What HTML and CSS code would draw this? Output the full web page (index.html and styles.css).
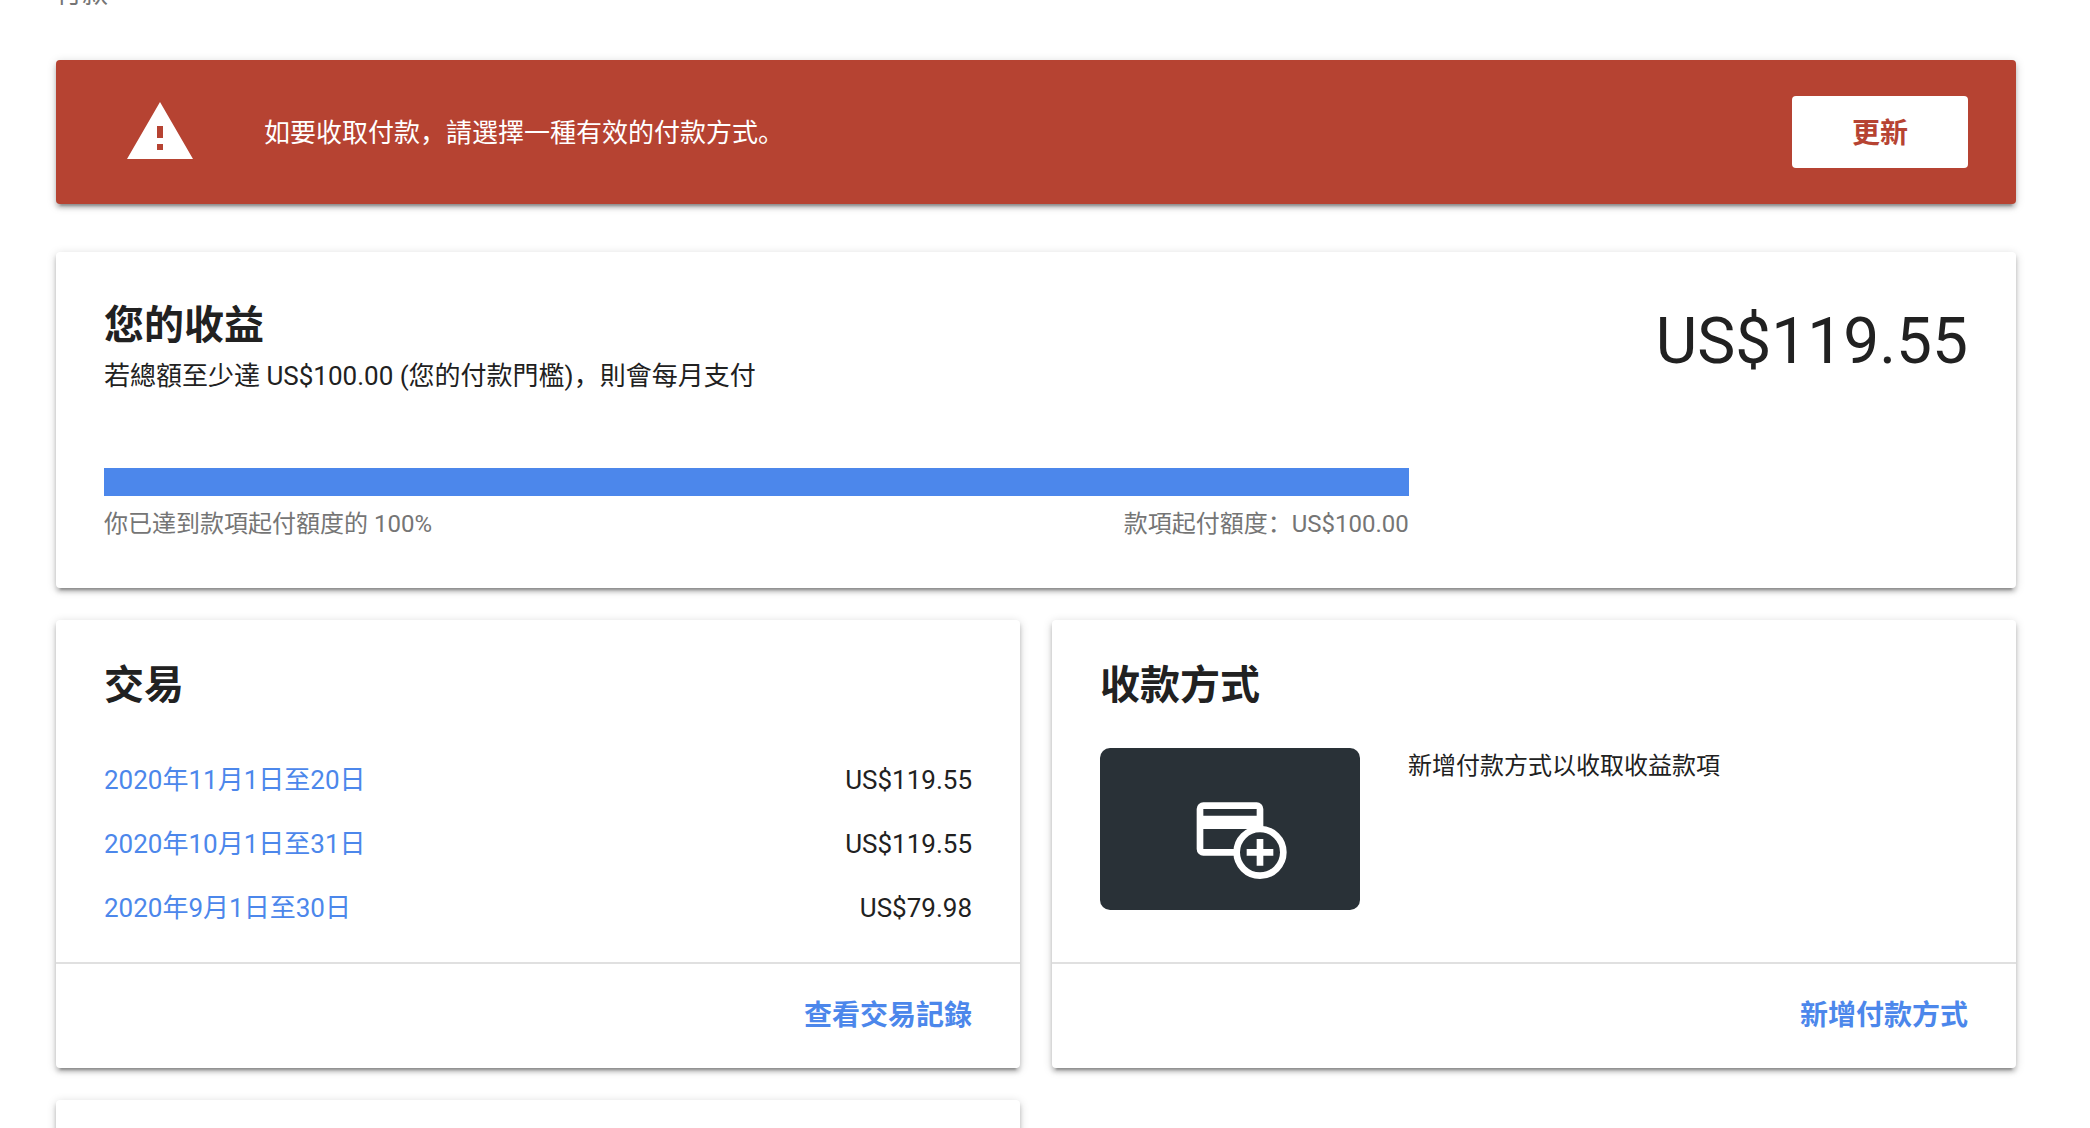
FILE: index.html
```
<!DOCTYPE html>
<html lang="zh-CN">
<head>
    <meta charset="UTF-8">
    <meta name="viewport" content="width=device-width, initial-scale=1.0">
    <title>付款</title>
    <link rel="stylesheet" href="styles.css">
</head>
<body>
    <header class="pageHeader">付款</header>

    <main class="content">
        <section class="banner">
            <svg class="bannerIcon" viewBox="0 0 24 24" aria-hidden="true">
                <path d="M1 21h22L12 2 1 21zm12-3h-2v-2h2v2zm0-4h-2v-4h2v4z"/>
            </svg>
            <p class="bannerText">如要收取付款，請選擇一種有效的付款方式。</p>
            <button type="button" class="bannerButton">更新</button>
        </section>

        <section class="card earnings">
            <div class="earningsHeader">
                <div>
                    <h2>您的收益</h2>
                    <p class="earningsNote">若總額至少達 US$100.00 (您的付款門檻)，則會每月支付</p>
                </div>
                <p class="balance">US$119.55</p>
            </div>
            <div class="threshold">
                <div class="bar"><div class="barFill" style="width: 100%"></div></div>
                <div class="barLabels">
                    <span>你已達到款項起付額度的 100%</span>
                    <span>款項起付額度：US$100.00</span>
                </div>
            </div>
        </section>

        <div class="cards">
            <section class="card">
                <div class="cardBody">
                    <h2>交易</h2>
                    <table class="transactions">
                        <tr>
                            <td><a href="#">2020年11月1日至20日</a></td>
                            <td class="amount">US$119.55</td>
                        </tr>
                        <tr>
                            <td><a href="#">2020年10月1日至31日</a></td>
                            <td class="amount">US$119.55</td>
                        </tr>
                        <tr>
                            <td><a href="#">2020年9月1日至30日</a></td>
                            <td class="amount">US$79.98</td>
                        </tr>
                    </table>
                </div>
                <div class="cardFooter">
                    <a href="#">查看交易記錄</a>
                </div>
            </section>

            <section class="card">
                <div class="cardBody">
                    <h2>收款方式</h2>
                    <div class="method">
                        <div class="methodTile">
                            <svg class="methodIcon" viewBox="0 0 24 24" aria-hidden="true">
                                <path fill="#fff" fill-rule="evenodd" d="M4 4h16a2 2 0 0 1 2 2v12a2 2 0 0 1-2 2H4a2 2 0 0 1-2-2V6a2 2 0 0 1 2-2zM4 6v2h16V6zM4 12v6h16v-6z"/>
                                <circle cx="21" cy="19" r="7" fill="#293137" stroke="#fff" stroke-width="2"/>
                                <path fill="#fff" d="M20 15h2v3h3v2h-3v3h-2v-3h-3v-2h3z"/>
                            </svg>
                        </div>
                        <p class="methodText">新增付款方式以收取收益款項</p>
                    </div>
                </div>
                <div class="cardFooter">
                    <a href="#">新增付款方式</a>
                </div>
            </section>

            <section class="card emptyCard"></section>
        </div>
    </main>
</body>
</html>
```

FILE: styles.css
```
* {
    box-sizing: border-box;
}

body {
    margin: 0;
    height: 100vh;
    overflow: hidden;
    font-family: Roboto, "Noto Sans CJK SC", sans-serif;
    font-size: 26px;
    line-height: 36px;
    color: #212121;
    background-color: #ffffff;
}

h2, p {
    margin: 0;
}

h2 {
    font-size: 40px;
    line-height: 52px;
    font-weight: 700;
}

a {
    color: #4c87eb;
    text-decoration: none;
}

/* scrolled almost out of view */
.pageHeader {
    margin-top: -24px;
    padding: 0 56px;
    height: 84px;
    color: #757575;
}

.content {
    padding: 0 74px 0 56px;
}

.card, .banner {
    border-radius: 4px;
    box-shadow: 0 4px 4px rgba(0, 0, 0, 0.18), 0 6px 2px -4px rgba(0, 0, 0, 0.24), 0 2px 10px rgba(0, 0, 0, 0.18);
}

.card {
    background-color: #ffffff;
}

.banner {
    display: flex;
    align-items: center;
    gap: 68px;
    padding: 36px 48px 36px 68px;
    margin-bottom: 48px;
    color: #ffffff;
    background-color: #b64332;
}

.bannerIcon {
    width: 72px;
    height: 72px;
    fill: #ffffff;
}

.bannerText {
    flex: 1;
    padding-top: 2px;
}

.bannerButton {
    width: 176px;
    height: 72px;
    padding: 0 0 2px;
    border: none;
    border-radius: 4px;
    font-family: inherit;
    font-size: 28px;
    font-weight: 700;
    color: #b64332;
    background-color: #ffffff;
    cursor: pointer;
}

.earnings {
    padding: 48px 48px 46px;
    margin-bottom: 32px;
}

.earningsHeader {
    display: flex;
    justify-content: space-between;
}

.earningsNote {
    margin-top: 6px;
}

.balance {
    font-size: 64px;
    line-height: 84px;
}

.threshold {
    width: 70%;
    margin-top: 74px;
}

.bar {
    height: 28px;
    background-color: #e0e0e0;
}

.barFill {
    height: 100%;
    background-color: #4c87eb;
}

.barLabels {
    display: flex;
    justify-content: space-between;
    margin-top: 10px;
    font-size: 24px;
    color: #757575;
}

.cards {
    display: grid;
    grid-template-columns: 1fr 1fr;
    gap: 32px;
}

.cardBody {
    height: 342px;
    padding: 40px 48px 0;
}

.cardBody h2 {
    margin-bottom: 36px;
}

.transactions {
    width: 100%;
    border-collapse: collapse;
}

.transactions td {
    height: 64px;
    padding: 0;
}

.transactions .amount {
    text-align: right;
}

.method {
    display: flex;
    gap: 48px;
}

.methodTile {
    display: flex;
    align-items: center;
    justify-content: center;
    width: 260px;
    height: 162px;
    border-radius: 10px;
    background-color: #293137;
}

.methodIcon {
    width: 80px;
    height: 80px;
    overflow: visible;
}

.methodText {
    font-size: 24px;
}

.cardFooter {
    display: flex;
    align-items: center;
    justify-content: flex-end;
    height: 106px;
    padding: 0 48px;
    border-top: 2px solid #e0e0e0;
    font-size: 28px;
    font-weight: 700;
}

.emptyCard {
    min-height: 448px;
}
```
